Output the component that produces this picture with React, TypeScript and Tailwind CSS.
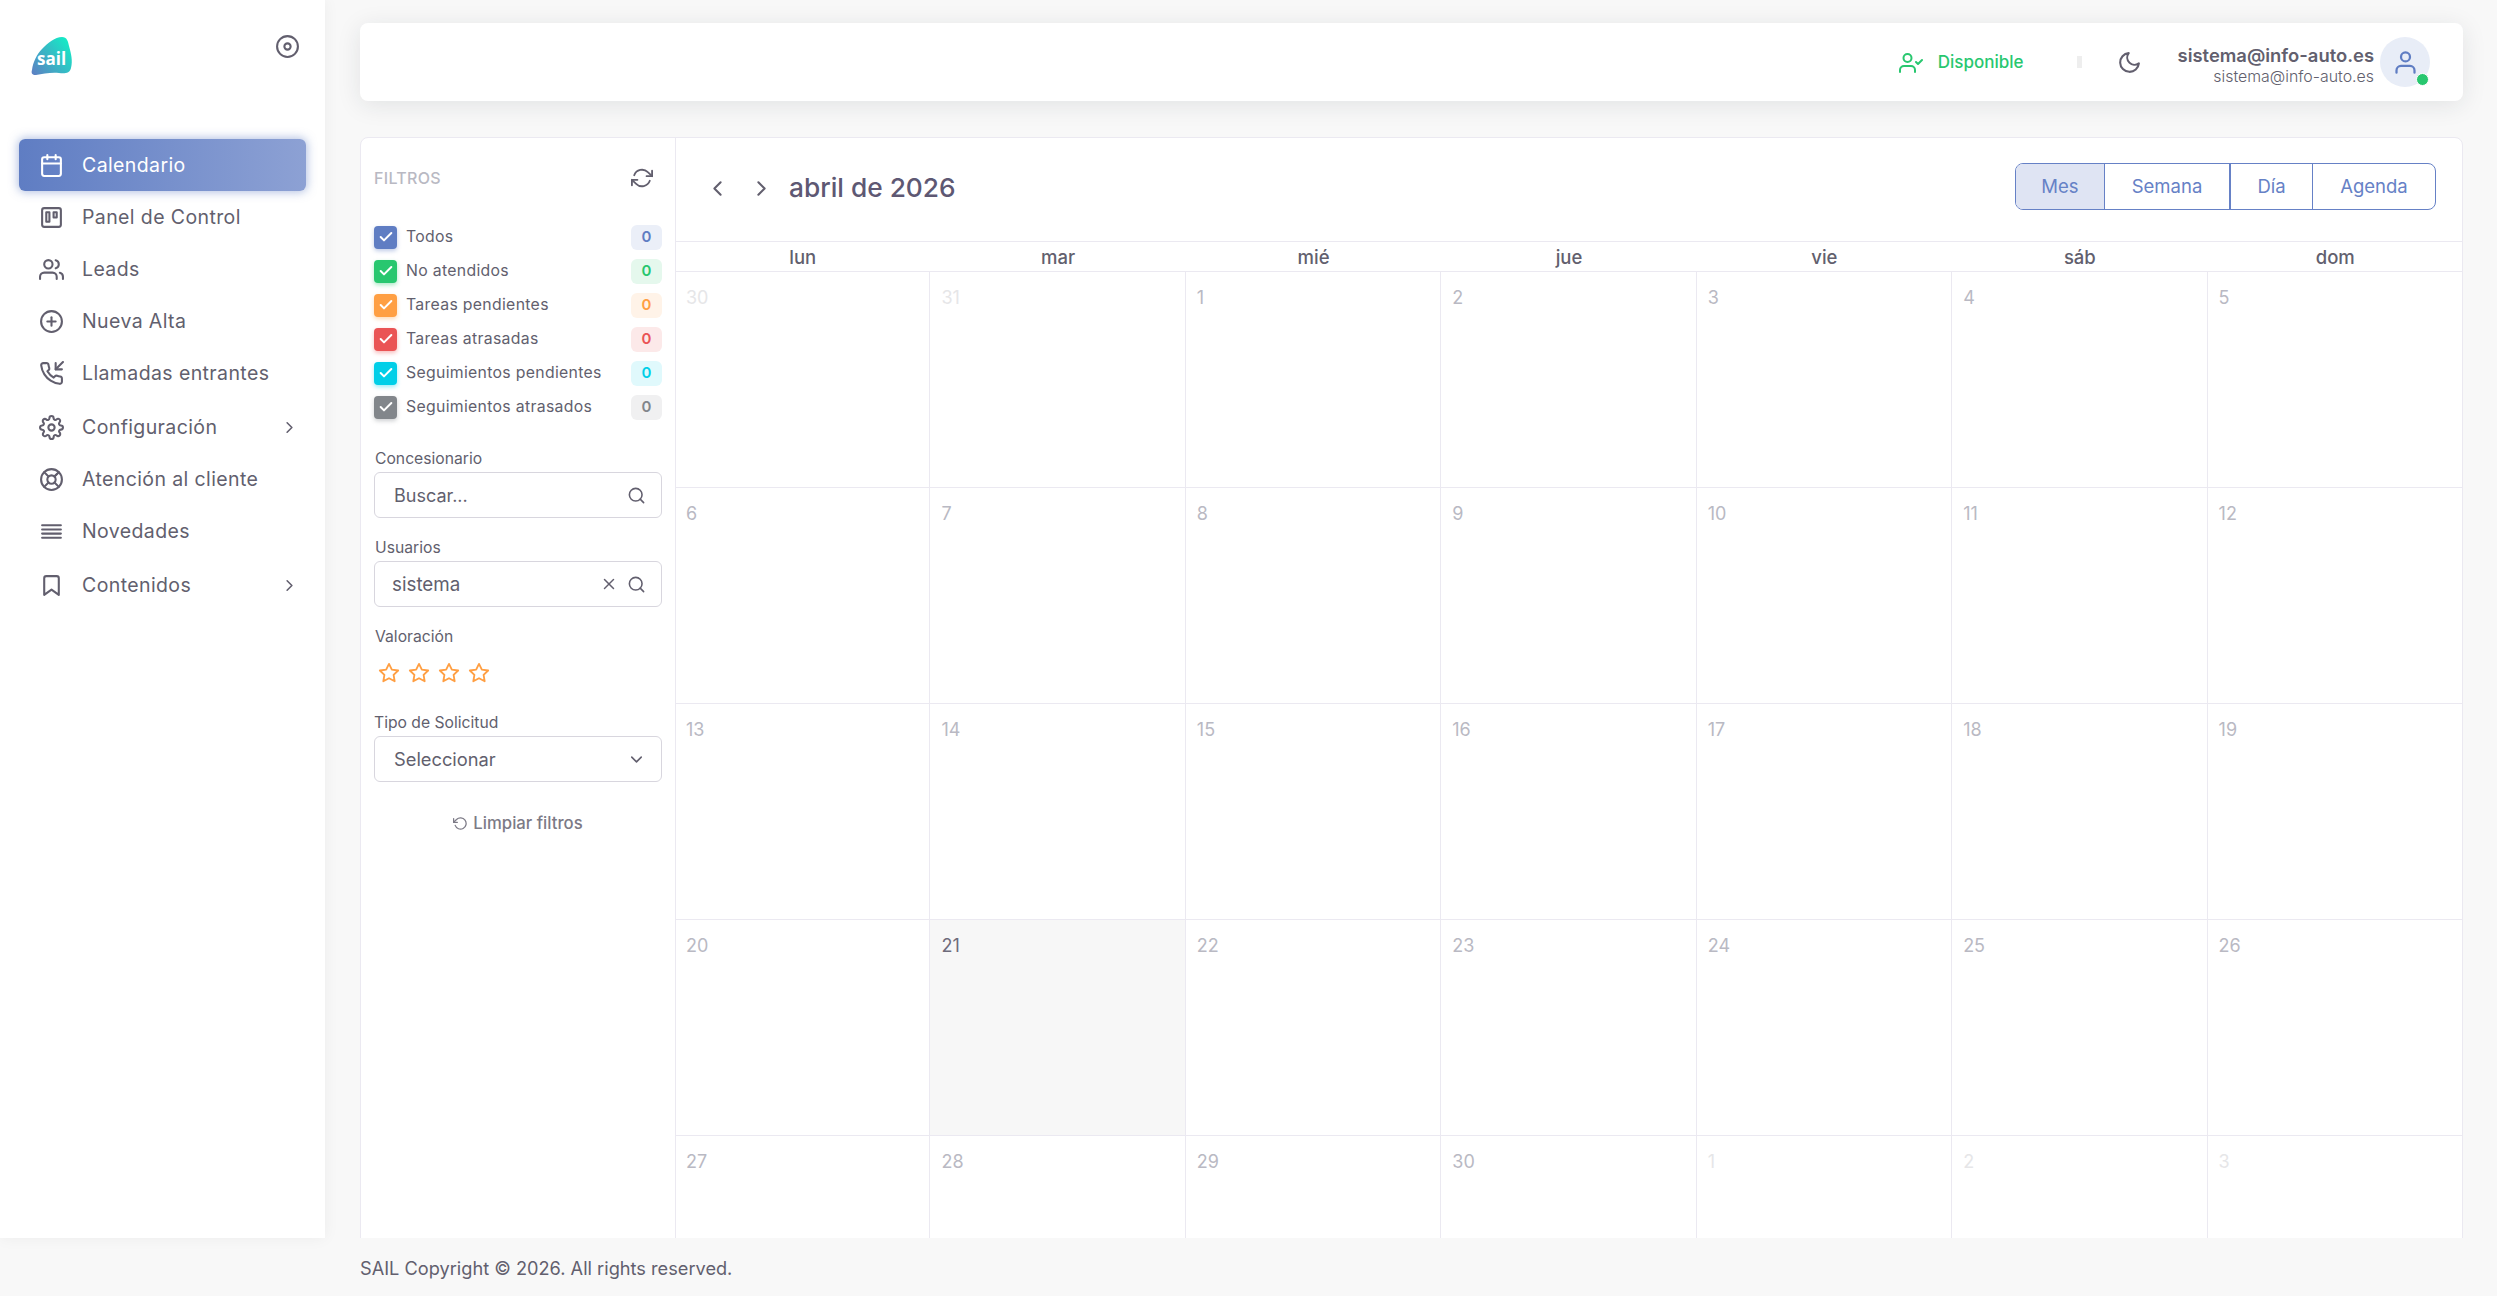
import React from 'react';
import {
  FiCalendar, FiTrello, FiUsers, FiPlusCircle, FiPhoneIncoming, FiSettings, FiLifeBuoy,
  FiAlignJustify, FiBookmark, FiChevronRight, FiChevronLeft, FiChevronDown, FiUserCheck,
  FiMoon, FiUser, FiSearch, FiX, FiStar, FiRotateCcw, FiRefreshCw, FiCheck, FiDisc,
} from 'react-icons/fi';

const navItems = [
  { label: 'Calendario', icon: FiCalendar, active: true },
  { label: 'Panel de Control', icon: FiTrello },
  { label: 'Leads', icon: FiUsers },
  { label: 'Nueva Alta', icon: FiPlusCircle },
  { label: 'Llamadas entrantes', icon: FiPhoneIncoming },
  { label: 'Configuración', icon: FiSettings, arrow: true },
  { label: 'Atención al cliente', icon: FiLifeBuoy },
  { label: 'Novedades', icon: FiAlignJustify },
  { label: 'Contenidos', icon: FiBookmark, arrow: true },
];

const filters = [
  { label: 'Todos', box: 'bg-[#5f7dc3] shadow-[0_2px_4px_rgba(95,125,195,0.4)]', badge: 'bg-[#ebeff8] text-[#5f7dc3]' },
  { label: 'No atendidos', box: 'bg-[#28c76f] shadow-[0_2px_4px_rgba(40,199,111,0.4)]', badge: 'bg-[#e5f8ed] text-[#28c76f]' },
  { label: 'Tareas pendientes', box: 'bg-[#ff9f43] shadow-[0_2px_4px_rgba(255,159,67,0.4)]', badge: 'bg-[#fff3e8] text-[#ff9f43]' },
  { label: 'Tareas atrasadas', box: 'bg-[#ea5455] shadow-[0_2px_4px_rgba(234,84,85,0.4)]', badge: 'bg-[#fce9e9] text-[#ea5455]' },
  { label: 'Seguimientos pendientes', box: 'bg-[#00cfe8] shadow-[0_2px_4px_rgba(0,207,232,0.4)]', badge: 'bg-[#e0f9fc] text-[#00cfe8]' },
  { label: 'Seguimientos atrasados', box: 'bg-[#82868b] shadow-[0_2px_4px_rgba(130,134,139,0.4)]', badge: 'bg-[#f0f0f1] text-[#82868b]' },
];

const weekDays = ['lun', 'mar', 'mié', 'jue', 'vie', 'sáb', 'dom'];

const cells = [
  [30, true], [31, true], [1], [2], [3], [4], [5],
  [6], [7], [8], [9], [10], [11], [12],
  [13], [14], [15], [16], [17], [18], [19],
  [20], [21], [22], [23], [24], [25], [26],
  [27], [28], [29], [30], [1, true], [2, true], [3, true],
] as [number, boolean?][];

function Logo() {
  return (
    <svg width="42" height="39" viewBox="0 0 42 39" className="block">
      <defs>
        <linearGradient id="sail-logo" x1="0" y1="1" x2="1" y2="0.2">
          <stop offset="0" stopColor="#5f7dc3" />
          <stop offset="1" stopColor="#14ecc6" />
        </linearGradient>
      </defs>
      <path
        d="M1 33C2 25 6 17 11 12C17 6 24 0 31 0C36 0 37 4 38 9C40 16 42 24 40 31C39 36 34 37 28 36C20 35 12 37 5 38C1 38 0 36 1 33Z"
        fill="url(#sail-logo)"
      />
      <text x="6" y="28" fill="#fff" fontSize="17" fontWeight="700" fontFamily="'Open Sans', sans-serif">sail</text>
    </svg>
  );
}

function Sidebar() {
  return (
    <aside className="w-[325px] shrink-0 bg-white shadow-[0_0_15px_rgba(34,41,47,0.05)] z-10">
      <div className="flex justify-between h-[139px] pl-[31px] pr-[25px] pt-[37px]">
        <Logo />
        <FiDisc className="text-[#625f6e] text-[25px] -mt-[3px]" />
      </div>
      <nav className="px-[19px]">
        {navItems.map((item) => (
          <div
            key={item.label}
            className={`flex items-center rounded-[6px] pl-[20px] pr-[7px] text-[19.5px] tracking-[0.02em] ${item.arrow ? 'h-[54px] pt-[2px]' : 'h-[52px]'} ${
              item.active
                ? 'text-white bg-gradient-to-r from-[#5f7dc3] to-[#8da1d4] shadow-[0_0_10px_1px_rgba(95,125,195,0.5)]'
                : 'text-[#625f6e]'
            }`}
          >
            <item.icon className="text-[25px] shrink-0" />
            <span className="ml-[18px] flex-1 pt-[2px]">{item.label}</span>
            {item.arrow && <FiChevronRight className="text-[19px]" />}
          </div>
        ))}
      </nav>
    </aside>
  );
}

function Topbar() {
  return (
    <header className="flex items-center justify-end h-[78px] bg-white rounded-[8px] shadow-[0_4px_24px_rgba(34,41,47,0.1)] pr-[33px]">
      <FiUserCheck className="text-[#28c76f] text-[24px] mt-[1px]" />
      <span className="ml-[15px] pt-[1px] text-[17px] font-medium text-[#28c76f]">Disponible</span>
      <span className="ml-[53px] w-[5px] h-[12px] bg-[#eeeeee]" />
      <FiMoon className="ml-[35px] text-[25px] text-[#625f6e] mt-[1px]" />
      <div className="ml-[36px] pt-[7px] text-right">
        <div className="text-[18.4px] leading-[21px] font-semibold text-[#625f6e]">sistema@info-auto.es</div>
        <div className="text-[15.9px] leading-[21px] font-light text-[#625f6e]">sistema@info-auto.es</div>
      </div>
      <div className="relative ml-[6px] w-[50px] h-[50px] rounded-full bg-[#e8edf7] flex items-center justify-center">
        <FiUser className="text-[#5f7dc3] text-[27px]" />
        <span className="absolute right-[1px] bottom-[1px] w-[13px] h-[13px] rounded-full bg-[#28c76f] border border-white" />
      </div>
    </header>
  );
}

function Label({ children, className }: { children: React.ReactNode; className: string }) {
  return <div className={`h-[20px] pt-[1px] leading-[20px] text-[15.7px] text-[#625f6e] ${className}`}>{children}</div>;
}

function Filters() {
  return (
    <div className="w-[315px] shrink-0 border-r border-[#ebe9f1] pl-[13px] pr-[13px] pt-[26px]">
      <div className="flex items-center justify-between h-[28px] pr-[9px]">
        <span className="text-[16px] font-medium tracking-[0.02em] text-[#b9b9c3]">FILTROS</span>
        <FiRefreshCw className="text-[#625f6e] text-[22px]" />
      </div>
      <div className="mt-[28px]">
        {filters.map((f) => (
          <div key={f.label} className="flex items-center h-[34px]">
            <span className={`flex items-center justify-center w-[23px] h-[23px] rounded-[4px] ${f.box}`}>
              <FiCheck className="text-white text-[16px] stroke-[3]" />
            </span>
            <span className="ml-[9px] flex-1 text-[15.8px] tracking-[0.02em] text-[#625f6e]">{f.label}</span>
            <span className={`flex items-center justify-center w-[31px] h-[25px] rounded-[6px] text-[15px] font-semibold ${f.badge}`}>0</span>
          </div>
        ))}
      </div>

      <Label className="mt-[24px] pl-[1px]">Concesionario</Label>
      <div className="mt-[4px] flex items-center h-[46px] rounded-[6px] border border-[#d8d6de] pl-[19px] pr-[15px]">
        <span className="flex-1 pt-[1px] text-[18px] text-[#625f6e]">Buscar...</span>
        <FiSearch className="text-[#625f6e] text-[19px]" />
      </div>

      <Label className="mt-[19px] pl-[1px]">Usuarios</Label>
      <div className="mt-[4px] flex items-center h-[46px] rounded-[6px] border border-[#d8d6de] pl-[17px] pr-[15px]">
        <span className="flex-1 pt-[2px] text-[18.8px] text-[#625f6e]">sistema</span>
        <FiX className="text-[#625f6e] text-[18px] mr-[9px]" />
        <FiSearch className="text-[#625f6e] text-[19px]" />
      </div>

      <Label className="mt-[19px] pl-[1px]">Valoración</Label>
      <div className="mt-[14px] flex items-center h-[24px] gap-[8px] pl-[4px] pt-[1px]">
        {[0, 1, 2, 3].map((i) => (
          <FiStar key={i} className="text-[#ff9f43] text-[22px]" />
        ))}
      </div>

      <Label className="mt-[28px]">Tipo de Solicitud</Label>
      <div className="mt-[4px] flex items-center h-[46px] rounded-[6px] border border-[#d8d6de] pl-[19px] pr-[15px]">
        <span className="flex-1 pt-[2px] text-[18.3px] text-[#625f6e]">Seleccionar</span>
        <FiChevronDown className="text-[#625f6e] text-[19px]" />
      </div>

      <div className="mt-[28px] pt-[3px] flex items-center justify-center h-[24px] text-[16.7px] font-medium text-[#7c7a86]">
        <FiRotateCcw className="text-[15px] mr-[5px]" />
        Limpiar filtros
      </div>
    </div>
  );
}

function CalendarView() {
  return (
    <div className="flex-1 min-w-0 -ml-[1px] -mr-[1px]">
      <div className="flex items-center h-[104px] border-b border-[#ebe9f1] pl-[30px] pr-[27px]">
        <FiChevronLeft className="text-[#625f6e] text-[25px] -mt-[2px]" />
        <FiChevronRight className="ml-[19px] text-[#625f6e] text-[25px] -mt-[2px]" />
        <h2 className="ml-[15px] text-[26.3px] font-medium text-[#5e5873] -mt-[3px]">abril de 2026</h2>
        <div className="ml-auto flex h-[47px] rounded-[8px] border border-[#6681c6] text-[18.5px] text-[#6681c6] overflow-hidden -mt-[6px]">
          <span className="w-[89px] flex items-center justify-center bg-[#dfe4f3] border-r border-[#6681c6]">Mes</span>
          <span className="w-[126px] flex items-center justify-center border-r-2 border-[#6681c6]">Semana</span>
          <span className="w-[82px] flex items-center justify-center border-r border-[#6681c6]">Día</span>
          <span className="w-[122px] flex items-center justify-center">Agenda</span>
        </div>
      </div>
      <div className="grid grid-cols-7 h-[30px] border-b border-[#ebe9f1]">
        {weekDays.map((d) => (
          <div key={d} className="flex items-center justify-center pt-[2px] text-[18.5px] font-medium text-[#625f6e]">{d}</div>
        ))}
      </div>
      <div className="grid grid-cols-7">
        {cells.map(([day, off], i) => (
          <div
            key={i}
            className={`h-[216px] border-b border-[#ebe9f1] pt-[14px] pl-[11px] leading-[24px] text-[18px] ${i % 7 === 6 ? '' : 'border-r'} ${
              off ? 'text-[#e6e6e8]' : i === 22 ? 'text-[#6e6b7b]' : 'text-[#b9b9c3]'
            } ${i === 22 ? 'bg-[#f7f7f7]' : ''}`}
          >
            {day}
          </div>
        ))}
      </div>
    </div>
  );
}

export default function App() {
  return (
    <div className="flex flex-col h-screen overflow-hidden bg-[#f8f8f8] font-['Inter','Liberation_Sans',sans-serif]">
      <div className="flex flex-1 min-h-0">
        <Sidebar />
        <main className="flex-1 min-w-0 overflow-hidden pt-[23px] pl-[35px] pr-[34px]">
          <Topbar />
          <div className="mt-[36px] flex bg-white border border-[#ebe9f1] rounded-t-[8px]">
            <Filters />
            <CalendarView />
          </div>
        </main>
      </div>
      <footer className="h-[58px] shrink-0 flex items-center pl-[360px] pt-[3px] text-[18.2px] text-[#625f6e]">
        SAIL Copyright © 2026. All rights reserved.
      </footer>
    </div>
  );
}
